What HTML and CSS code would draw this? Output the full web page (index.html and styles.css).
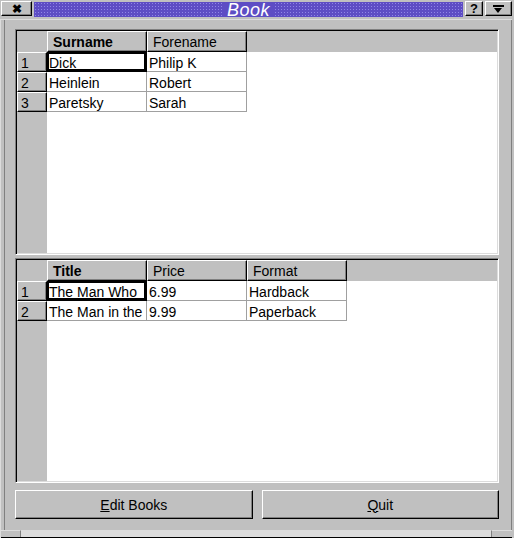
FILE: index.html
```html
<!DOCTYPE html>
<html>
<head>
<meta charset="utf-8">
<link rel="stylesheet" href="styles.css">
</head>
<body>
<div class="window">
  <div class="titlebar">
    <div class="tb-btn close">✖</div>
    <div class="caption"><span class="caption-text">Book</span></div>
    <div class="tb-btn help">?</div>
    <div class="tb-btn menu"><span class="menu-glyph"></span></div>
  </div>
  <div class="frame">
    <div class="content">
      <div class="table top">
        <div class="hrow">
          <div class="corner"></div>
          <div class="hcell bold">Surname</div>
          <div class="hcell">Forename</div>
        </div>
        <div class="body">
          <div class="vheader">
            <div class="vcell">1</div>
            <div class="vcell">2</div>
            <div class="vcell">3</div>
          </div>
          <div class="cells">
            <div class="row"><div class="cell current">Dick</div><div class="cell">Philip K</div></div>
            <div class="row"><div class="cell">Heinlein</div><div class="cell">Robert</div></div>
            <div class="row"><div class="cell">Paretsky</div><div class="cell">Sarah</div></div>
          </div>
        </div>
      </div>
      <div class="splitter"></div>
      <div class="table bottom">
        <div class="hrow">
          <div class="corner"></div>
          <div class="hcell bold">Title</div>
          <div class="hcell">Price</div>
          <div class="hcell">Format</div>
        </div>
        <div class="body">
          <div class="vheader">
            <div class="vcell">1</div>
            <div class="vcell">2</div>
          </div>
          <div class="cells">
            <div class="row"><div class="cell current">The Man Who</div><div class="cell">6.99</div><div class="cell">Hardback</div></div>
            <div class="row"><div class="cell">The Man in the</div><div class="cell">9.99</div><div class="cell">Paperback</div></div>
          </div>
        </div>
      </div>
      <div class="buttons">
        <div class="button"><span class="u">E</span>dit Books</div>
        <div class="button"><span class="u">Q</span>uit</div>
      </div>
    </div>
    <div class="resize">
      <div class="grip left"></div>
      <div class="grip mid"></div>
      <div class="grip right"></div>
    </div>
  </div>
</div>
</body>
</html>
```

FILE: styles.css
```css
html, body {
  margin: 0;
  padding: 0;
}
body {
  width: 514px;
  height: 538px;
  overflow: hidden;
  background: #c0c0c0;
  font-family: "Liberation Sans", Arial, sans-serif;
  font-size: 14px;
  color: #000;
}
.window {
  width: 514px;
  height: 538px;
  display: flex;
  flex-direction: column;
  box-sizing: border-box;
  background: #c0c0c0;
}
.titlebar {
  height: 18px;
  display: flex;
  align-items: flex-start;
  padding: 1px 2px 0 1px;
  box-sizing: border-box;
  gap: 2px;
}
.tb-btn {
  height: 15px;
  box-sizing: border-box;
  border-top: 1px solid #fff;
  border-left: 1px solid #fff;
  border-right: 1px solid #000;
  border-bottom: 1px solid #000;
  box-shadow: inset -1px -1px 0 #808080;
  background: #c0c0c0;
  display: flex;
  align-items: center;
  justify-content: center;
  font-weight: bold;
  line-height: 1;
}
.close {
  width: 31px;
  font-size: 12px;
}
.help {
  width: 18px;
  font-size: 13px;
}
.menu {
  width: 27px;
}
.menu-glyph {
  width: 11px;
  height: 7px;
  box-sizing: border-box;
  border-top: 2px solid #000;
  position: relative;
}
.menu-glyph::after {
  content: "";
  position: absolute;
  left: 1px;
  top: 1px;
  border-left: 4.5px solid transparent;
  border-right: 4.5px solid transparent;
  border-top: 5px solid #000;
}
.caption {
  flex: 1;
  height: 15px;
  margin-top: 1px;
  background-color: #5d4dc4;
  background-image: radial-gradient(circle, #8f85e6 0.8px, transparent 1px);
  background-size: 3px 3px;
  display: flex;
  align-items: center;
  justify-content: center;
}
.caption-text {
  color: #fff;
  font-style: italic;
  font-size: 18px;
  line-height: 17px;
  height: 15px;
  padding: 0 4px;
  background: #5d4dc4;
  letter-spacing: 0.5px;
}
.frame {
  flex: 1;
  display: flex;
  flex-direction: column;
  border-top: 1px solid #dcdcdc;
  border-left: 1px solid #dcdcdc;
  margin: 1px 2px 0 0;
  box-shadow: inset 3px 0 0 #c0c0c0, inset 4px 0 0 #808080, inset -1px 0 0 #808080;
}
.content {
  flex: 1;
  display: flex;
  flex-direction: column;
  padding: 9px 13px 0 14px;
}
.table {
  box-sizing: border-box;
  border-top: 1px solid #808080;
  border-left: 1px solid #808080;
  border-right: 1px solid #fff;
  border-bottom: 1px solid #fff;
  box-shadow: inset 1px 1px 0 #000, inset -1px -1px 0 #dcdcdc;
  padding: 1px;
  display: flex;
  flex-direction: column;
  background: #fff;
  overflow: hidden;
}
.table.top {
  height: 226px;
}
.table.bottom {
  height: 225px;
}
.splitter {
  height: 3px;
}
.hrow {
  display: flex;
  height: 21px;
  background: #c0c0c0;
  flex: none;
}
.corner {
  width: 30px;
  flex: none;
}
.hcell {
  width: 100px;
  box-sizing: border-box;
  border-top: 1px solid #fff;
  border-left: 1px solid #fff;
  border-right: 1px solid #000;
  border-bottom: 1px solid #000;
  box-shadow: inset -1px -1px 0 #808080;
  padding: 2px 0 0 5px;
  line-height: 17px;
  white-space: nowrap;
  overflow: hidden;
}
.bold {
  font-weight: bold;
}
.body {
  flex: 1;
  display: flex;
}
.vheader {
  width: 30px;
  background: #c0c0c0;
  flex: none;
}
.vcell {
  height: 20px;
  box-sizing: border-box;
  border-top: 1px solid #fff;
  border-left: 1px solid #fff;
  border-right: 1px solid #000;
  border-bottom: 1px solid #000;
  box-shadow: inset -1px -1px 0 #808080;
  padding: 2px 0 0 3px;
  line-height: 17px;
}
.cells {
  flex: 1;
}
.row {
  display: flex;
  height: 20px;
}
.cell {
  width: 100px;
  box-sizing: border-box;
  border-right: 1px solid #a0a0a0;
  border-bottom: 1px solid #a0a0a0;
  padding: 2px 0 0 2px;
  line-height: 18px;
  white-space: nowrap;
  overflow: hidden;
}
.cell.current {
  box-shadow: inset 0 0 0 2px #000;
  border-color: #000;
}
.buttons {
  display: flex;
  gap: 9px;
  margin-top: 7px;
  height: 29px;
}
.button {
  flex: 1;
  box-sizing: border-box;
  border-top: 1px solid #fff;
  border-left: 1px solid #fff;
  border-right: 1px solid #000;
  border-bottom: 1px solid #000;
  box-shadow: inset -1px -1px 0 #808080;
  display: flex;
  align-items: center;
  justify-content: center;
}
.u {
  text-decoration: underline;
}
.resize {
  height: 7px;
  display: flex;
  margin-top: auto;
  border-bottom: 1px solid #000;
}
.grip {
  box-sizing: border-box;
  border-top: 1px solid #dcdcdc;
}
.grip.left {
  width: 20px;
  background: #c0c0c0;
  border-right: 1px solid #808080;
}
.grip.mid {
  flex: 1;
  background: #dcdcdc;
  border-right: 1px solid #808080;
}
.grip.right {
  width: 20px;
  background: #c0c0c0;
}
```
